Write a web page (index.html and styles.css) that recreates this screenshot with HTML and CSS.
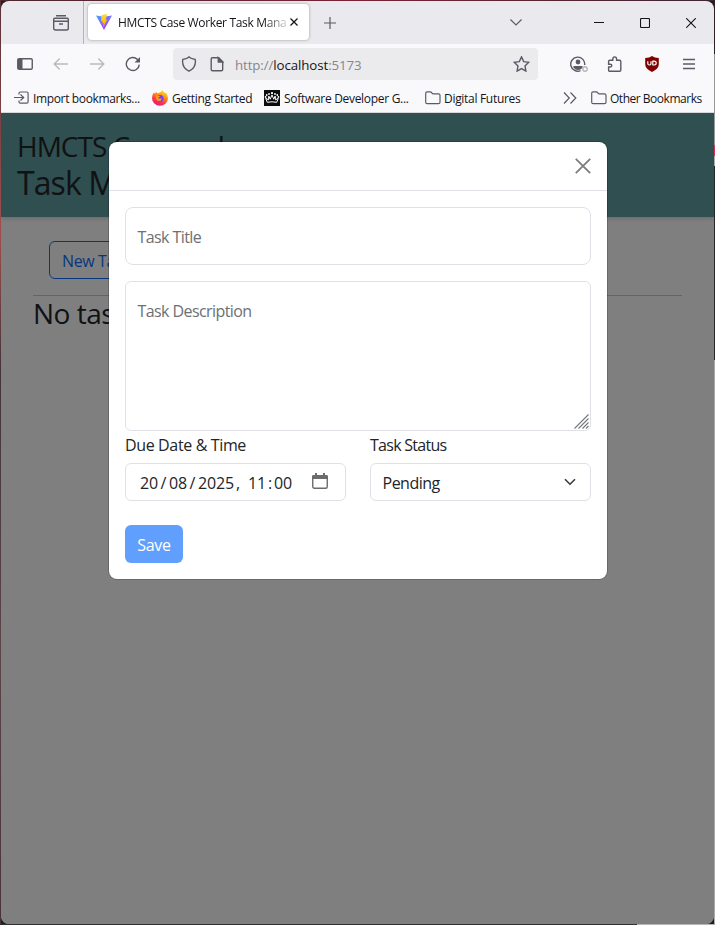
FILE: index.html
```html
<!DOCTYPE html>
<html lang="en">
<head>
<meta charset="utf-8">
<title>HMCTS Case Worker Task Manager</title>
<link rel="stylesheet" href="styles.css">
</head>
<body>
<div class="window">
  <div class="tabbar">
    <div class="pinned">
      <svg width="16" height="16" viewBox="0 0 16 16"><path d="M3 .75h10M1.7 3.2h12.6q1 0 1 1v9q0 1.8-1.8 1.8h-11Q.7 15 .7 13.200V4.200q0-1 1-1zM.7 6.200h14.600M6 9h4"/></svg>
    </div>
    <div class="tab">
      <svg class="vite" width="16" height="16" viewBox="0 0 16 16"><defs><linearGradient id="vp" x1="0" y1="0" x2=".6" y2="1"><stop offset="0" stop-color="#41a6ff"/><stop offset="1" stop-color="#b833ff"/></linearGradient><linearGradient id="vy" x1="0" y1="0" x2="0" y2="1"><stop offset="0" stop-color="#ffdd35"/><stop offset="1" stop-color="#ffa800"/></linearGradient></defs><path fill="url(#vp)" d="M0 1.500l8 1.300 8-1.300L8 16z"/><path fill="url(#vy)" d="M11.200 0L5.500 1.100 5 7.400l1.700-.4-.5 2.500 1.500-.4-.7 4.200L11.300 5.600l-1.700.3z"/></svg>
      <span class="tab-title">HMCTS Case Worker Task Mana</span>
      <svg class="tab-close" width="8" height="8" viewBox="0 0 8 8"><path d="M.5.5l7 7M7.500.5l-7 7"/></svg>
    </div>
    <svg class="plus" width="12" height="12" viewBox="0 0 12 12"><path d="M6 0v12M0 6h12"/></svg>
    <svg class="alltabs" width="12" height="7" viewBox="0 0 12 7"><path d="M.4.5L6 6 11.600.5"/></svg>
    <div class="controls">
      <svg width="10" height="10" viewBox="0 0 10 10"><path d="M0 4.500h10"/></svg>
      <svg width="10" height="10" viewBox="0 0 10 10"><rect x=".5" y=".5" width="9" height="9" rx="1"/></svg>
      <svg width="10" height="10" viewBox="0 0 10 10"><path d="M.2.2l9.600 9.600M9.800.2L.2 9.800"/></svg>
    </div>
  </div>

  <div class="navbar">
    <div class="nav-buttons">
      <svg width="16" height="16" viewBox="0 0 16 16"><rect x=".75" y="2.750" width="14.500" height="10.500" rx="1.300"/><path fill="#5b5b66" stroke="none" d="M1 3h4.500v10H1z"/></svg>
      <svg class="off" width="16" height="16" viewBox="0 0 16 16"><path d="M15 8H1.500M6.700 2.500L1.200 8l5.500 5.500"/></svg>
      <svg class="off" width="16" height="16" viewBox="0 0 16 16"><path d="M1 8h13.500M9.300 2.500L14.800 8l-5.500 5.500"/></svg>
      <svg width="16" height="16" viewBox="0 0 16 16"><path d="M14.300 8.600a6.500 6.500 0 1 1-1.800-5.100l1.200 1.200"/><path fill="#5b5b66" stroke="none" d="M15 1v5.500H9.500z"/></svg>
    </div>
    <div class="urlbar">
      <svg width="16" height="16" viewBox="0 0 16 16"><path d="M8 .9Q9 2.300 14.200 3.400 15.600 11.500 8 15.200.4 11.500 1.800 3.400 7 2.300 8 .9z"/></svg>
      <svg class="page-icon" width="16" height="16" viewBox="0 0 16 16"><path d="M3.200 1.700h6.500l4 4v7.800q0 1.300-1.300 1.300H3.500q-1.300 0-1.300-1.300V3q0-1.300 1-1.300z"/><path fill="#5b5b66" d="M9.300 1.700v4.300h4.300z"/></svg>
      <span class="url">http://<b>localhost</b>:5173</span>
      <svg class="star" width="17" height="16" viewBox="0 0 17 16"><path d="M8.500.9l2.200 4.700 5 .7-3.700 3.600.9 5.200-4.400-2.500-4.400 2.500.9-5.200L1.300 6.300l5-.7z"/></svg>
    </div>
    <div class="tools">
      <svg width="18" height="16" viewBox="0 0 18 16"><path d="M10.500 14.600A7 7 0 1 1 14.700 9"/><circle cx="8" cy="6" r="2.400" fill="#5b5b66" stroke="none"/><path fill="#5b5b66" stroke="none" d="M3.500 9.900h9v1.600q-1.500 2.500-4.500 2.500t-4.500-2.500z"/><circle cx="15" cy="13" r="2.200" stroke="#b6b6bb"/></svg>
      <svg width="16" height="16" viewBox="0 0 16 16"><path d="M1.600 5.500q0-1.200 1.200-1.200h3V3.100q0-2.200 1.900-2.200t1.900 2.200v1.200h3q1.200 0 1.200 1.200V14q0 1.200-1.200 1.200H2.800q-1.200 0-1.200-1.200v-3h1.700q1.500 0 1.500-1.400T3.300 8.200H1.600z"/></svg>
      <span class="ublock"><svg width="16" height="16" viewBox="0 0 16 16"><path fill="#800000" stroke="none" d="M8 0q2.500 2 6.800 2v6.500Q14.800 12.500 8 16 1.200 12.500 1.200 8.500V2Q5.500 2 8 0z"/><path stroke="#fff" stroke-width="1.200" d="M3.800 5.200v2.300q0 1.500 1.600 1.500T7 7.500V5.200M8.800 5.200V9h1.400q2 0 2-1.900t-2-1.900z"/></svg></span>
      <svg width="14" height="16" viewBox="0 0 14 16"><path d="M1 3.500h12M1 8h12M1 12.500h12"/></svg>
    </div>
  </div>

  <div class="bookmarks">
    <svg width="15" height="14" viewBox="0 0 15 14"><path d="M5 3.500V2.300Q5 1 6.300 1h6.500q1.300 0 1.300 1.300v8.500q0 1.300-1.300 1.300H6.300Q5 12.100 5 10.800V9.500M0 6.500h9M6.500 3.500l3.200 3-3.200 3"/></svg>
    <span class="bm w-import">Import bookmarks...</span>
    <svg class="firefox" width="16" height="16" viewBox="0 0 16 16"><defs><linearGradient id="ff" x1=".8" y1="0" x2=".3" y2="1"><stop offset="0" stop-color="#fff44f"/><stop offset=".35" stop-color="#ff980e"/><stop offset=".7" stop-color="#ff3647"/><stop offset="1" stop-color="#e31587"/></linearGradient></defs><path fill="url(#ff)" stroke="none" d="M10.300 0q1 1.700 2.700 3l1-.6Q16 5 16 8.300A8 7.500 0 0 1 0 8.300Q0 5 1.800 2.600L3 3.700 4.200 1.800 5.500 3.500Q9 3 10.300 0z"/><circle cx="8" cy="8.500" r="3.500" fill="#7542e5" stroke="none"/><path fill="#ff9a16" stroke="none" d="M3.500 5l4.800 1.300L6 8q1.800 1.200 3.500 0l-.5 2.500Q6 12 4.300 9.500z"/></svg>
    <span class="bm w-start">Getting Started</span>
    <svg class="crown" width="16" height="16" viewBox="0 0 16 16"><path fill="#0b0c0c" stroke="none" d="M0 0h16v16H0z"/><g fill="#fff" stroke="none"><circle cx="8" cy="3.200" r="1.100"/><circle cx="5" cy="4" r=".9"/><circle cx="11" cy="4" r=".9"/><circle cx="2.700" cy="5" r=".9"/><circle cx="13.300" cy="5" r=".9"/><circle cx="1.600" cy="7" r=".9"/><circle cx="14.400" cy="7" r=".9"/></g><path stroke="#fff" stroke-width="1" d="M3.300 12.300L1.700 8.300l2.800 1.500L4.800 6l1.400 3.200L8 5l1.800 4.200L11.200 6l.3 3.800 2.800-1.500-1.600 4q-4.700-1-9.400 0z"/></svg>
    <span class="bm w-soft">Software Developer G...</span>
    <svg class="folder" width="16" height="14" viewBox="0 0 16 14"><path d="M2 .8h3.300q.8 0 1.500 1t1.500 1H13.500q1.500 0 1.500 1.500v6.900q0 1.500-1.500 1.500h-11.300Q.7 12.700.7 11.200V2.200Q.7.8 2 .8z"/></svg>
    <span class="bm w-dig">Digital Futures</span>
    <svg class="more" width="14" height="12" viewBox="0 0 14 12"><path d="M1 .5L6.300 6 1 11.500M7.500.5L12.800 6l-5.300 5.500"/></svg>
    <svg class="folder" width="16" height="14" viewBox="0 0 16 14"><path d="M2 .8h3.300q.8 0 1.500 1t1.500 1H13.500q1.500 0 1.500 1.500v6.900q0 1.500-1.500 1.500h-11.300Q.7 12.700.7 11.200V2.200Q.7.8 2 .8z"/></svg>
    <span class="bm w-other">Other Bookmarks</span>
  </div>

  <div class="page">
    <header class="app-header">
      <div class="brand">HMCTS Caseworker</div>
      <div class="product">Task Manager</div>
    </header>
    <main class="content">
      <div class="actions"><button class="btn-new">New Task</button></div>
      <div class="empty">No tasks</div>
    </main>
    <div class="backdrop">
      <section class="modal">
        <div class="modal-header">
          <svg width="16" height="16" viewBox="0 0 16 16"><path d="M.8.8l14.400 14.400M15.200.8L.8 15.200"/></svg>
        </div>
        <div class="modal-body">
          <div class="field title-field"><span class="w-title">Task Title</span></div>
          <div class="field desc-field"><span class="w-desc">Task Description</span>
            <svg class="grip" width="15" height="15" viewBox="0 0 15 15"><path d="M.5 14.500l14-14M4.500 14.500l10-10M8.500 14.500l6-6M12 14.500l2.500-2.500"/></svg>
          </div>
          <div class="row">
            <div class="col">
              <div class="label w-due">Due Date &amp; Time</div>
              <div class="control">
                <div class="date"><span>20</span><i>/</i><span>08</span><i>/</i><span>2025</span><i class="comma">,</i><span>11</span><i class="colon">:</i><span>00</span></div>
                <svg class="cal" width="16" height="16" viewBox="0 0 16 16"><rect x=".75" y="2.750" width="14.500" height="12.500" rx="1.500"/><path fill="#6c6c70" stroke="none" d="M0 3.500Q0 2 1.500 2h13Q16 2 16 3.500V6H0zM3 0h2v3H3zM11 0h2v3h-2z"/></svg>
              </div>
            </div>
            <div class="col">
              <div class="label w-status">Task Status</div>
              <div class="control select"><span class="w-pend">Pending</span>
                <svg width="12" height="8" viewBox="0 0 12 8"><path d="M1 1.200l5 5 5-5"/></svg>
              </div>
            </div>
          </div>
          <button class="btn-save">Save</button>
        </div>
      </section>
    </div>
  </div>
</div>
</body>
</html>
```
FILE: styles.css
```css
* { box-sizing: border-box; }

body {
  margin: 0;
  width: 715px;
  height: 925px;
  padding: 1px;
  overflow: hidden;
  font-family: "Open Sans", "Noto Sans", sans-serif;
  color: #212529;
  background:
    linear-gradient(90deg, #303033 0 637px, #b5b5b5 637px) 0 924px / 715px 1px no-repeat,
    linear-gradient(#30202a 0 54px, #999 54px 145px, #d13655 145px 156px, #aaa 156px 166px, #28282a 166px 360px, #aaa 360px) 714px 0 / 1px 925px no-repeat,
    linear-gradient(#583038, #a04f4c 25%, #44343a 40%, #5a4547 70%, #49333a) 0 0 / 1px 925px no-repeat,
    linear-gradient(90deg, #4a2730, #7b2236 50%, #3a2630) 0 0 / 715px 1px no-repeat,
    #241c22;
}

svg { flex: none; display: block; fill: none; stroke: #5b5b66; stroke-width: 1.4; }
button { font: inherit; }

.window {
  width: 713px;
  height: 923px;
  border-radius: 8px;
  overflow: hidden;
  display: flex;
  flex-direction: column;
}

/* Browser tab strip */
.tabbar { height: 43px; flex: none; display: flex; align-items: center; background: #eae9ee; }
.pinned {
  width: 83px; height: 43px; padding-left: 52px; flex: none;
  display: flex; align-items: center; border-right: 1px solid #b4b3b9;
}
.tab {
  width: 221px; height: 36px; margin: 0 0 1px 4px; padding: 0 11px 0 8px; flex: none;
  display: flex; align-items: center;
  background: #fff; border-radius: 4px; box-shadow: 0 0 3px rgba(0, 0, 0, .35);
}
.vite { stroke: none; }
.tab-title {
  width: 168px; margin: 0 4px 0 6px; white-space: nowrap;
  font-size: 12px; letter-spacing: -.34px; color: #15141a;
  mask-image: linear-gradient(90deg, #000 145px, transparent 174px);
}
.tab-close { stroke: #15141a; stroke-width: 1.3; }
.plus { margin-left: 15px; stroke-width: 1.2; }
.alltabs { margin-left: 174px; stroke-width: 1.2; }
.controls { margin-left: 72px; display: flex; gap: 36px; }
.controls svg { stroke: #15141a; stroke-width: 1.1; }

/* Address row */
.navbar { height: 40px; flex: none; display: flex; align-items: center; background: #f9f9fb; }
.nav-buttons { display: flex; gap: 20px; padding-left: 16px; width: 172px; flex: none; }
.off { stroke: #b9b9be; }
.urlbar {
  width: 365px; height: 32px; flex: none; padding: 0 8px; border-radius: 4px;
  display: flex; align-items: center; background: #ebebed;
}
.page-icon { margin-left: 12px; }
.url { margin: 2px 0 0 10px; font-size: 13.300px; letter-spacing: -.1px; color: #86868c; }
.url b { font-weight: 400; color: #15141a; }
.star { margin-left: auto; }
.tools { display: flex; align-items: center; margin-left: 32px; gap: 20px; }
.tools > :first-child { margin-right: -1px; }
.ublock { margin: 0 2px 0 1px; }

/* Bookmarks row */
.bookmarks {
  height: 29px; flex: none; display: flex; align-items: center; padding-left: 13px;
  background: #f9f9fb; border-bottom: 1px solid #dcdce0;
}
.bm { font-size: 12px; white-space: nowrap; letter-spacing: -.3px; color: #15141a; flex: none; }
.bookmarks svg { stroke-width: 1.2; }
.bookmarks .w-import { width: 107px; margin: 0 12px 0 4px; letter-spacing: -.36px; }
.w-start { width: 81px; margin: 0 11px 0 4px; }
.w-soft { width: 125px; margin: 0 16px 0 4px; }
.w-dig { width: 77px; margin: 0 42px 0 3px; }
.more { margin-right: 14px; }
.bookmarks .w-other { margin-left: 3px; letter-spacing: -.48px; }

/* Page */
.page { position: relative; flex: 1; background: #fff; }
.app-header {
  height: 104px; padding: 15px 16px 0; white-space: nowrap; line-height: 36px;
  background: #5f9ea0; box-shadow: 0 2px 4px rgba(0, 0, 0, .15);
}
.brand { font-size: 28px; letter-spacing: -1px; }
.product { font-size: 32px; letter-spacing: -.9px; padding-top: 1px; }
.content { padding: 24px 32px 0; }
.actions { padding: 0 16px 16px; border-bottom: 1px solid #c8c9ca; }
.btn-new {
  display: block; height: 38px; padding: 2px 12px 0; border: 1px solid #0d6efd; border-radius: 6px;
  background: transparent; color: #0d6efd; font-size: 16px; letter-spacing: -.4px;
}
.empty { font-size: 28px; line-height: 34px; letter-spacing: -.5px; }

/* Dialog */
.backdrop { position: absolute; inset: 0; padding-top: 29px; background: rgba(0, 0, 0, .5); }
.modal {
  width: 498px; height: 437px; margin-left: 108px; background: #fff; border-radius: 8px;
  box-shadow: 0 0 0 1px rgba(0, 0, 0, .18);
}
.modal-header {
  height: 49px; padding: 0 16px; display: flex; align-items: center; justify-content: flex-end;
  border-bottom: 1px solid #dee2e6;
}
.modal-header svg { stroke: #7f7f7f; stroke-width: 1.9; }
.modal-body { padding: 16px; font-size: 16px; }
.field {
  border: 1px solid #dee2e6; border-radius: 6px; padding: 17px 11.500px; line-height: 24px;
  color: #6d7074;
}
.field span { display: block; }
.title-field { height: 58px; margin-bottom: 16px; border-radius: 8px; }
.desc-field {
  height: 150px; display: flex; justify-content: space-between; align-items: flex-start;
  padding: 17px 1px 1px 11.500px;
}
.grip { align-self: flex-end; stroke: #77777a; stroke-width: 1.1; }
.row { display: grid; grid-template-columns: 1fr 1fr; gap: 24px; }
.label { height: 32px; line-height: 28px; }
.control {
  height: 38px; border: 1px solid #dee2e6; border-radius: 6px; padding: 0 14px;
  display: flex; align-items: center; justify-content: space-between; line-height: 36px;
}
.select { padding: 0 14px 0 11.500px; }
.select span { padding-top: 2px; }
.select svg { stroke: #343a40; stroke-width: 1.6; }
.date { display: flex; padding-top: 2px; }
.date span { letter-spacing: -.15px; }
.date i { font-style: normal; width: 11px; text-align: center; }
.date .comma { text-align: left; padding-left: 2px; width: 14px; }
.date .colon { width: 8px; }
.cal { stroke: #6c6c70; margin: 0 3px 3px 0; }
.w-title, .w-desc { letter-spacing: -.58px; }
.w-due { letter-spacing: -.36px; }
.w-status { letter-spacing: -.72px; }
.w-pend { letter-spacing: -.5px; }
.btn-save {
  display: block; width: 58px; height: 38px; margin-top: 24px; padding: 2px 0 0; border: 0;
  border-radius: 6px; background: #619fff; color: #fff; font-size: 16px; letter-spacing: -.3px;
}
```
